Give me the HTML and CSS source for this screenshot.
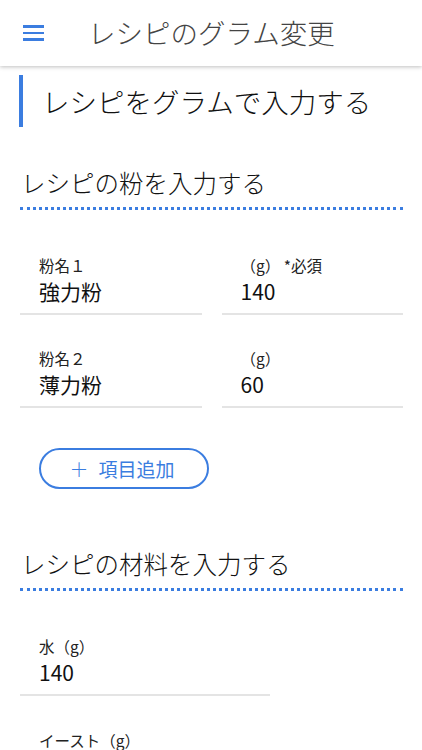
FILE: index.html
```html
<!DOCTYPE html>
<html lang="ja">
<head>
  <meta charset="UTF-8" />
  <meta name="viewport" content="width=device-width, initial-scale=1.0" />
  <title>レシピのグラム変更</title>
  <link rel="stylesheet" href="styles.css">
</head>
<body>
  <header class="app-bar">
    <button class="menu-button" aria-label="menu">
      <span></span><span></span><span></span>
    </button>
    <div class="app-title">レシピのグラム変更</div>
  </header>

  <main class="content">
    <h1 class="page-title">レシピをグラムで入力する</h1>

    <h2 class="section-title">レシピの粉を入力する</h2>
    <div class="field-grid">
      <div class="field">
        <label>粉名１</label>
        <div class="value">強力粉</div>
      </div>
      <div class="field">
        <label>（g） *必須</label>
        <div class="value">140</div>
      </div>
      <div class="field">
        <label>粉名２</label>
        <div class="value">薄力粉</div>
      </div>
      <div class="field">
        <label>（g）</label>
        <div class="value">60</div>
      </div>
    </div>
    <button class="add-button"><span class="plus">＋</span>項目追加</button>

    <h2 class="section-title">レシピの材料を入力する</h2>
    <div class="field-list">
      <div class="field wide">
        <label>水（g）</label>
        <div class="value">140</div>
      </div>
      <div class="field wide">
        <label>イースト（g）</label>
        <div class="value"></div>
      </div>
    </div>
  </main>
</body>
</html>
```

FILE: styles.css
```css
body {
  margin: 0;
  font-family: "Noto Sans CJK JP", "Noto Sans", sans-serif;
  background-color: #fff;
  color: #222;
}

.app-bar {
  height: 66px;
  display: flex;
  align-items: center;
  background-color: #fff;
  box-shadow: 0 1px 4px rgba(0, 0, 0, 0.25);
  position: relative;
  z-index: 1;
}

.menu-button {
  width: 22px;
  margin-left: 23px;
  padding: 0;
  border: none;
  background: none;
  display: flex;
  flex-direction: column;
  gap: 4px;
}

.menu-button span {
  display: block;
  width: 21px;
  height: 2.5px;
  background-color: #3b7de0;
}

.app-title {
  margin-left: 43px;
  font-size: 27.5px;
  font-weight: 300;
  color: #444;
  line-height: 1;
}

.content {
  padding: 0 19px 0 20px;
}

.page-title {
  margin: 9px 0 0 -1px;
  height: 52px;
  line-height: 52px;
  border-left: 4px solid #3b7de0;
  padding-left: 19px;
  font-size: 27.5px;
  font-weight: 300;
  color: #111;
}

.section-title {
  margin: 38px 0 45px;
  line-height: 36px;
  padding: 0 0 6px 1px;
  border-bottom: 3px dotted #3b7de0;
  font-size: 24.5px;
  font-weight: 300;
  color: #111;
}

.field-grid {
  display: grid;
  grid-template-columns: 1fr 1fr;
  column-gap: 20px;
  row-gap: 33px;
}

.field-list {
  display: flex;
  flex-direction: column;
  gap: 34px;
}

.field {
  padding: 0 19px 8px;
  border-bottom: 2px solid #e4e4e4;
}

.field.wide {
  width: 212px;
}

.field label {
  display: block;
  font-size: 15.5px;
  line-height: 20px;
  color: #222;
}

.field .value {
  margin-top: 2px;
  height: 28px;
  font-size: 21px;
  line-height: 28px;
  color: #111;
}

.add-button {
  display: flex;
  align-items: center;
  justify-content: center;
  margin: 40px 0 57px 19px;
  width: 170px;
  height: 41px;
  border: 2px solid #3b7de0;
  border-radius: 21px;
  background-color: #fff;
  color: #3b7de0;
  font-family: inherit;
  font-size: 19px;
  cursor: pointer;
}

.add-button .plus {
  margin: 0 10px 0 -4px;
  font-weight: 300;
}

.add-button + .section-title {
  margin-top: 0;
}
```
